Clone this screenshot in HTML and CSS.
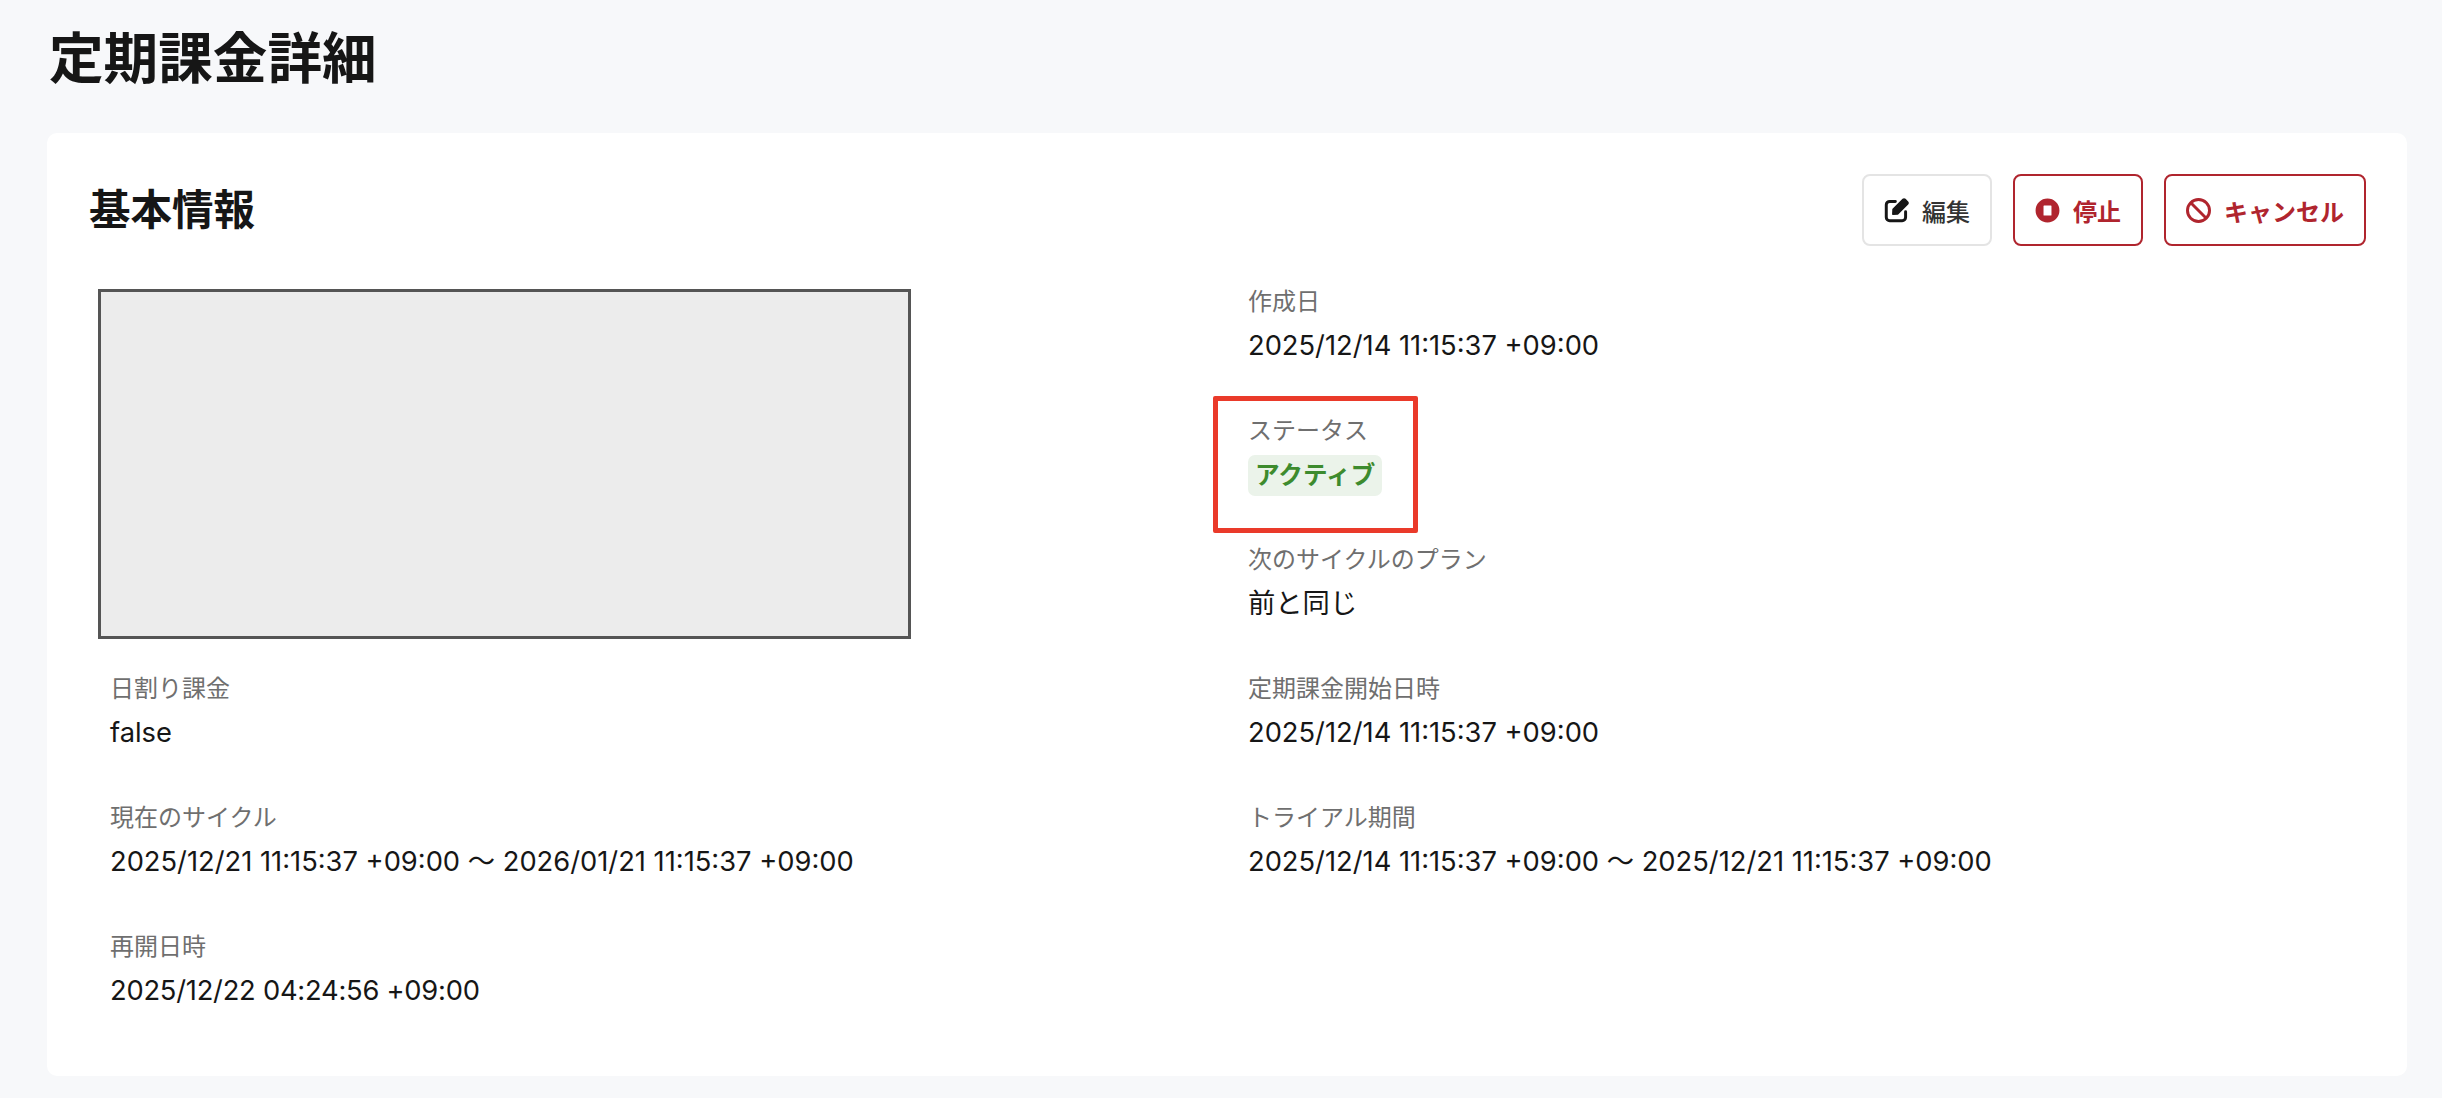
FILE: index.html
```html
<!DOCTYPE html>
<html lang="ja">
<head>
<meta charset="utf-8">
<title>定期課金詳細</title>
<link rel="stylesheet" href="styles.css">
</head>
<body>
<main class="page">
  <h1 class="page-title">定期課金詳細</h1>
  <section class="card">
    <header class="card-head">
      <h2 class="card-title">基本情報</h2>
      <div class="actions">
        <button class="btn btn-default">
          <svg class="icon" viewBox="1 1 22 22" fill="none" stroke="currentColor" stroke-width="2.6" stroke-linecap="round" stroke-linejoin="round"><path d="M11 4H6a3 3 0 0 0-3 3v11a3 3 0 0 0 3 3h11a3 3 0 0 0 3-3v-5"/><path fill="currentColor" stroke-width="1.4" d="M19.5 2.2l2.3 2.3a1.2 1.2 0 0 1 0 1.7L13 15l-4.2.2.2-4.2 8.800-8.800a1.200 1.200 0 0 1 1.700 0z"/></svg>
          <span>編集</span>
        </button>
        <button class="btn btn-danger">
          <svg class="icon" viewBox="1 1 22 22"><path fill="currentColor" fill-rule="evenodd" d="M12 1.500a10.500 10.500 0 1 1 0 21 10.500 10.500 0 0 1 0-21zM8.500 8v8a.500.500 0 0 0 .500.500h6a.500.500 0 0 0 .500-.500V8a.500.500 0 0 0-.500-.500H9a.500.500 0 0 0-.500.500z"/></svg>
          <span>停止</span>
        </button>
        <button class="btn btn-danger">
          <svg class="icon" viewBox="1 1 22 22" fill="none" stroke="currentColor" stroke-width="2.600"><circle cx="12" cy="12" r="9.700"/><path d="M5.200 5.200l13.600 13.600"/></svg>
          <span>キャンセル</span>
        </button>
      </div>
    </header>
    <div class="grid">
      <div class="placeholder"></div>
      <div class="field"><div class="label">作成日</div><div class="value">2025/12/14 11:15:37 +09:00</div></div>
      <div class="field"><div class="label">ステータス</div><div class="value value-badge"><span class="badge">アクティブ</span></div></div>
      <div class="field"><div class="label">次のサイクルのプラン</div><div class="value">前と同じ</div></div>
      <div class="field"><div class="label">日割り課金</div><div class="value">false</div></div>
      <div class="field"><div class="label">定期課金開始日時</div><div class="value">2025/12/14 11:15:37 +09:00</div></div>
      <div class="field"><div class="label">現在のサイクル</div><div class="value">2025/12/21 11:15:37 +09:00 〜 2026/01/21 11:15:37 +09:00</div></div>
      <div class="field"><div class="label">トライアル期間</div><div class="value">2025/12/14 11:15:37 +09:00 〜 2025/12/21 11:15:37 +09:00</div></div>
      <div class="field"><div class="label">再開日時</div><div class="value value-tight">2025/12/22 04:24:56 +09:00</div></div>
    </div>
  </section>
</main>
<div class="annotation"></div>
</body>
</html>
```

FILE: styles.css
```css
* { box-sizing: border-box; }
html, body { margin: 0; height: 100%; }
body {
  background: #f7f8fa;
  color: #161616;
  font-family: Inter, "Noto Sans CJK JP", sans-serif;
  overflow: hidden;
}
.page { padding: 29px 35px 0 47px; }
.page-title {
  margin: 0 0 46px 2px;
  font-size: 54.6px;
  line-height: 58px;
  font-weight: 700;
}
.card {
  background: #fff;
  border-radius: 10px;
  height: 943px;
  padding: 41px 41px 0 42px;
}
.card-head {
  display: flex;
  justify-content: space-between;
  align-items: center;
  height: 72px;
}
.card-title {
  margin: 0;
  font-size: 41.5px;
  line-height: 72px;
  font-weight: 700;
}
.actions { display: flex; gap: 21px; }
.btn {
  display: flex;
  align-items: center;
  gap: 13px;
  height: 72px;
  padding: 0 20px;
  background: #fff;
  border-radius: 8px;
  font-family: inherit;
  font-size: 24px;
  font-weight: 500;
  cursor: pointer;
}
.btn-default { border: 2px solid #e4e4e4; color: #333; }
.btn-default .icon { color: #161616; }
.btn-danger { border: 2px solid #b0252e; color: #b0252e; font-weight: 700; }
.icon { width: 25px; height: 25px; flex: none; }
.grid {
  display: grid;
  grid-template-columns: 1138px 1fr;
  grid-auto-rows: 129px;
  margin-top: 38px;
  margin-left: 9px;
}
.placeholder {
  grid-row: span 3;
  width: 813px;
  height: 350px;
  margin-top: 5px;
  background: #ececec;
  border: 3px solid #555;
}
.field { padding: 0 12px; }
.label {
  font-size: 24px;
  line-height: 36px;
  color: #6f6f6f;
}
.value {
  margin-top: 8px;
  font-size: 27.3px;
  line-height: 36px;
  color: #161616;
}
.value-badge { margin-top: 6px; }
.value-tight { letter-spacing: -0.23px; }
.badge {
  display: inline-block;
  padding: 0 7px;
  height: 41px;
  line-height: 41px;
  background: #ebf3ea;
  color: #3d8b2e;
  border-radius: 7px;
  font-size: 24.6px;
  font-weight: 700;
}
.annotation {
  position: absolute;
  left: 1213px;
  top: 396px;
  width: 205px;
  height: 137px;
  border: 5px solid #ea3a2a;
  border-radius: 2px;
}
```
